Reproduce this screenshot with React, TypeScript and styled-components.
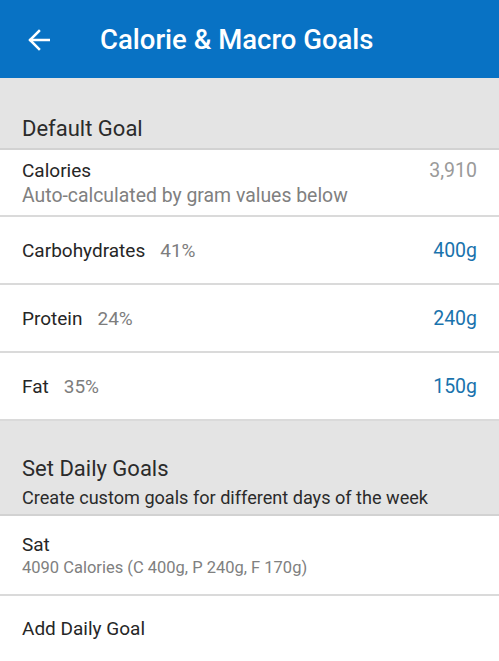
import React from "react";
import styled, { createGlobalStyle } from "styled-components";

const Global = createGlobalStyle`
  html, body { margin: 0; padding: 0; background: #ffffff; }
  body { font-family: Roboto, "Noto Sans", Arial, sans-serif; -webkit-font-smoothing: antialiased; }
  * { box-sizing: border-box; }
`;

const Screen = styled.div`
  width: 499px;
  height: 661px;
  overflow: hidden;
  display: flex;
  flex-direction: column;
  background: #ffffff;
`;

const AppBar = styled.header`
  height: 78px;
  background: #0872c4;
  display: flex;
  align-items: center;
  padding: 2px 0 0 28px;
  gap: 50px;
  flex-shrink: 0;
`;

const BackIcon = styled.svg`
  width: 22px;
  height: 22px;
  flex-shrink: 0;
`;

const Title = styled.h1`
  margin: 0;
  color: #ffffff;
  font-size: 27.5px;
  font-weight: 500;
  line-height: 32px;
`;

const SectionHeader = styled.div<{ $top: number; $bottom: number }>`
  background: #e4e4e4;
  padding: ${(p) => p.$top}px 22px ${(p) => p.$bottom}px;
  border-bottom: 2px solid #d2d2d2;
  display: flex;
  flex-direction: column;
  gap: 4px;
  flex-shrink: 0;
`;

const SectionTitle = styled.div`
  font-size: 22px;
  color: #2b2b2b;
  line-height: 26px;
`;

const SectionSub = styled.div`
  font-size: 18.1px;
  color: #2b2b2b;
  line-height: 24px;
`;

const Row = styled.div<{ $height: number; $top?: number; $last?: boolean }>`
  height: ${(p) => p.$height}px;
  padding: ${(p) => (p.$top !== undefined ? `${p.$top}px 22px 0` : "1px 22px 0")};
  display: flex;
  align-items: ${(p) => (p.$top !== undefined ? "flex-start" : "center")};
  justify-content: space-between;
  border-bottom: ${(p) => (p.$last ? "none" : "2px solid #dadada")};
  flex-shrink: 0;
`;

const RowText = styled.div<{ $gap: number }>`
  display: flex;
  flex-direction: column;
  gap: ${(p) => p.$gap}px;
`;

const Label = styled.div`
  font-size: 19px;
  color: #262626;
  line-height: 24px;
`;

const Percent = styled.span`
  color: #7d7d7d;
  margin-left: 15px;
`;

const SubLabel = styled.div<{ $small?: boolean }>`
  font-size: ${(p) => (p.$small ? "16.5px" : "19.4px")};
  color: #808080;
  line-height: ${(p) => (p.$small ? "22px" : "24px")};
`;

const Value = styled.div<{ $accent?: boolean }>`
  font-size: 19.5px;
  line-height: 24px;
  color: ${(p) => (p.$accent ? "#1a73ad" : "#9a9a9a")};
`;

const macros = [
  { name: "Carbohydrates", pct: "41%", value: "400g" },
  { name: "Protein", pct: "24%", value: "240g" },
  { name: "Fat", pct: "35%", value: "150g" },
];

export default function App() {
  return (
    <Screen>
      <Global />
      <AppBar>
        <BackIcon viewBox="0 0 22 22" fill="none" stroke="#ffffff" strokeWidth="2.5" strokeLinecap="square" strokeLinejoin="miter">
          <path d="M21 11H2.5" />
          <path d="M11 2L2 11l9 9" />
        </BackIcon>
        <Title>Calorie &amp; Macro Goals</Title>
      </AppBar>

      <SectionHeader $top={38} $bottom={6}>
        <SectionTitle>Default Goal</SectionTitle>
      </SectionHeader>

      <Row $height={67} $top={8.5}>
        <RowText $gap={1}>
          <Label>Calories</Label>
          <SubLabel>Auto-calculated by gram values below</SubLabel>
        </RowText>
        <Value>3,910</Value>
      </Row>

      {macros.map((m) => (
        <Row key={m.name} $height={68}>
          <Label>
            {m.name}
            <Percent>{m.pct}</Percent>
          </Label>
          <Value $accent>{m.value}</Value>
        </Row>
      ))}

      <SectionHeader $top={35} $bottom={4}>
        <SectionTitle>Set Daily Goals</SectionTitle>
        <SectionSub>Create custom goals for different days of the week</SectionSub>
      </SectionHeader>

      <Row $height={80} $top={17}>
        <RowText $gap={0}>
          <Label>Sat</Label>
          <SubLabel $small>4090 Calories (C 400g, P 240g, F 170g)</SubLabel>
        </RowText>
      </Row>

      <Row $height={65} $last>
        <Label>Add Daily Goal</Label>
      </Row>
    </Screen>
  );
}
